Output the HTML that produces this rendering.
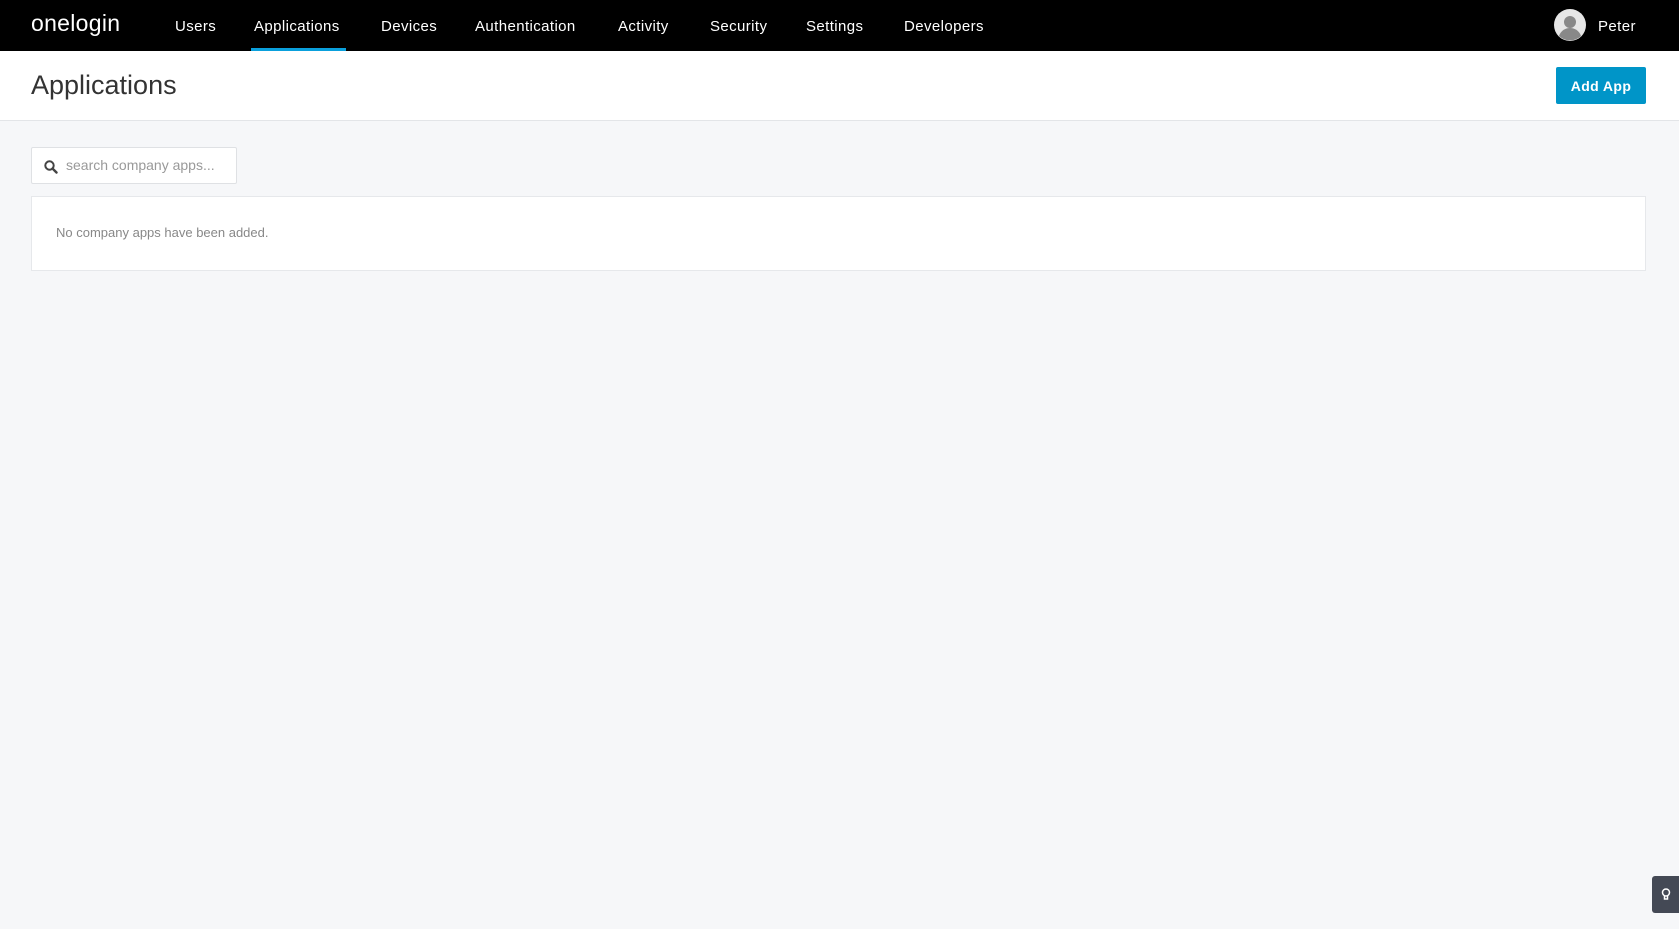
<!DOCTYPE html><html><head><style>
*{margin:0;padding:0;box-sizing:border-box}
body{width:1679px;height:929px;background:#f6f7f9;font-family:"Liberation Sans",sans-serif;position:relative;overflow:hidden}
.nav{position:absolute;left:0;top:0;width:1679px;height:51px;background:#000}
.nav a{position:absolute;top:18px;color:#fff;font-size:15px;letter-spacing:0.4px}
.logo{position:absolute;left:31px;top:10px;color:#fff;font-size:23px;letter-spacing:0.3px}
.ul{position:absolute;left:251px;top:48px;width:95px;height:3px;background:#0aa0dc}
.hdr{position:absolute;left:0;top:51px;width:1679px;height:70px;background:#fff;border-bottom:1px solid #e3e5e8}
.title{position:absolute;left:31px;top:19px;font-size:27px;color:#333}
.btn{position:absolute;left:1556px;top:16px;width:90px;height:37px;background:#0095c8;border-radius:2px;color:#fff;font-size:14px;font-weight:bold;text-align:center;line-height:38px;letter-spacing:0.4px}
.search{position:absolute;left:31px;top:147px;width:206px;height:37px;background:#fff;border:1px solid #dfe1e4;border-radius:2px}
.search span{position:absolute;left:34px;top:9px;font-size:14px;color:#999}
.panel{position:absolute;left:31px;top:196px;width:1615px;height:75px;background:#fff;border:1px solid #e6e8eb}
.panel span{position:absolute;left:24px;top:28px;font-size:13px;color:#888}
.bulb{position:absolute;left:1652px;top:876px;width:30px;height:37px;background:#444955;border-radius:3px}
</style></head><body>
<div class="nav">
<div class="logo">onelogin</div>
<a style="left:175px">Users</a>
<a style="left:254px">Applications</a>
<a style="left:381px">Devices</a>
<a style="left:475px">Authentication</a>
<a style="left:618px">Activity</a>
<a style="left:710px">Security</a>
<a style="left:806px">Settings</a>
<a style="left:904px">Developers</a>
<div class="ul"></div>
<svg style="position:absolute;left:1554px;top:9px" width="32" height="32" viewBox="0 0 32 32"><circle cx="16" cy="16" r="16" fill="#e6e6e6"/><circle cx="16" cy="13" r="6" fill="#888"/><path d="M5 27c2-6 7-8 11-8s9 2 11 8a16 16 0 0 1-22 0z" fill="#888"/></svg>
<a style="left:1598px">Peter</a>
</div>
<div class="hdr"><div class="title">Applications</div><div class="btn">Add App</div></div>
<div class="search"><svg style="position:absolute;left:12px;top:12px" width="14" height="14" viewBox="0 0 14 14"><circle cx="5.5" cy="5.5" r="4.2" fill="none" stroke="#444" stroke-width="2"/><path d="M8.6 8.6L12.5 12.5" stroke="#444" stroke-width="2.4" stroke-linecap="round"/></svg><span>search company apps...</span></div>
<div class="panel"><span>No company apps have been added.</span></div>
<div class="bulb"><svg style="position:absolute;left:9px;top:12px" width="10" height="14" viewBox="0 0 10 14"><circle cx="5" cy="4.5" r="3.5" fill="none" stroke="#fff" stroke-width="1.5"/><path d="M3.5 8v3h3V8" fill="none" stroke="#fff" stroke-width="1.5"/></svg></div>
</body></html>
